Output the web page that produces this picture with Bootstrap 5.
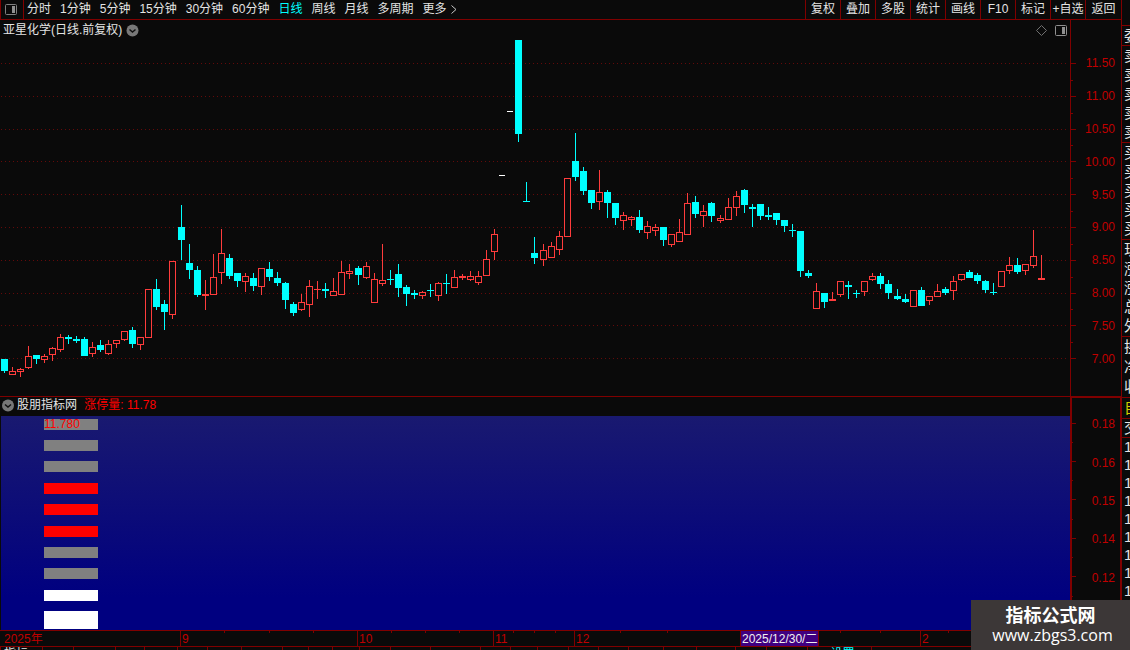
<!DOCTYPE html>
<html lang="zh-CN">
<head>
<meta charset="utf-8">
<meta name="viewport" content="width=device-width, initial-scale=1">
<title>亚星化学 日线</title>
<link href="https://cdn.jsdelivr.net/npm/bootstrap@5.3.0/dist/css/bootstrap.min.css" rel="stylesheet">
<style>
:root { --line: #800000; --ink: #e4e4e4; --axis: #c00000; --ground: #0a0a0a; }
body { background: var(--ground); color: var(--ink); font-family: "Liberation Sans", "Noto Sans CJK SC", sans-serif; font-size: 12px; line-height: 18px; }
.workspace { display: grid; grid-template-rows: 20px 377fr 233fr 17px 3px; }
svg { display: block; }
button, .period { background: none; border: 0; padding: 0; color: inherit; font: inherit; line-height: 18px; text-decoration: none; white-space: nowrap; }
.toolbar { border-bottom: 1px solid var(--line); }
.toolbar .period, .toolbar .tool { line-height: 19px; }
.layout-btn { width: 24px; border: solid var(--line); border-width: 0 1px; }
.periods { gap: 9px; padding-left: 3px; }
.period.active { color: #00ffff; }
.tool { width: 35px; border-left: 1px solid var(--line); }
.tool:first-child { margin-left: 0; }
.tool:last-child { width: 36px; }
.price { border-bottom: 1px solid var(--line); }
.pane-head { height: 20px; padding: 0 3px; }
.signal-head { height: 19px; line-height: 17px; padding-bottom: 2px; }
.min-0 { min-width: 0; min-height: 0; }
.scale { width: 51px; border-left: 1px solid var(--line); color: var(--axis); }
.scale svg { width: 5px; }
.scale ul { padding: 27px 6px 21px 0; }
.signal .scale { border-left-width: 2px; border-right: 1px solid var(--line); border-top: 1px solid var(--line); }
.signal .scale svg { width: 4px; }
.signal .scale ul { padding: 7px 5px 33px 0; }
.field { background: linear-gradient(#191970, #000080 85%); margin-left: 1px; }
.reading { left: 43px; top: 0; line-height: 16px; color: #f00; }
.alert-red { color: #f00; }
.dates { grid-template-columns: 180fr 177fr 136fr 81fr 166fr 180fr 201fr; border: solid var(--line); border-width: 1px 0; color: var(--axis); line-height: 16px; }
.dates > span { border-left: 1px solid var(--line); padding-left: 1px; height: 15px; }
.dates > span:first-child { border-left: 0; padding-left: 4px; }
.dates .cursor { background: #400080; color: #f0f0f0; border-right: 1px solid var(--line); display: block; width: 78px; height: 15px; margin-left: -1px; padding-left: 1px; }
.strip-text { top: 0; line-height: 14px; }
.strip-text .cyan-text { color: #00ffff; width: 26%; }
.quotes { width: 9px; border-left: 1px solid var(--line); padding-top: 25px; font-size: 15px; }
.quotes div { border-top: 1px solid var(--line); padding-left: 2px; white-space: nowrap; }
.quotes .q-head, .quotes .q-tab { line-height: 19px; }
.quotes .q-five { line-height: 19px; padding-bottom: 1px; }
.quotes .q-three { line-height: 20px; }
.quotes .q-tab { color: #d0d000; padding-bottom: 1px; }
.quotes .q-col, .quotes .q-ticks { line-height: 18px; }
.stamp { width: 159px; height: 50px; background: #3c3737; color: #fff; font-family: "Open Sans", "Noto Sans CJK SC", sans-serif; z-index: 3; }
.stamp strong { font: bold 18px/22px "Noto Sans CJK SC", sans-serif; margin-top: -3px; }
.stamp span { font-size: 16px; line-height: 20px; padding-left: 4px; }
</style>
</head>
<body class="vh-100 overflow-hidden position-relative d-flex">
<main class="workspace flex-grow-1 min-0 h-100">
  <nav class="toolbar d-flex">
    <button class="layout-btn d-flex align-items-center ps-1" aria-label="布局">
      <svg width="13" height="12" viewBox="0 0 13 12"><rect x=".5" y=".5" width="11" height="10" rx="1" fill="none" stroke="#808080"/><rect x="7" y="2" width="3" height="7" fill="#909090"/></svg>
    </button>
    <div class="periods d-flex">
      <a class="period" href="#">分时</a><a class="period" href="#">1分钟</a><a class="period" href="#">5分钟</a><a class="period" href="#">15分钟</a><a class="period" href="#">30分钟</a><a class="period" href="#">60分钟</a><a class="period active" href="#">日线</a><a class="period" href="#">周线</a><a class="period" href="#">月线</a><a class="period" href="#">多周期</a>
      <a class="period d-flex align-items-center gap-1" href="#">更多 <svg width="6" height="9" viewBox="0 0 6 9"><path d="M.5.5l4.500 4-4.500 4" fill="none" stroke="#c8c8c8"/></svg></a>
    </div>
    <div class="d-flex ms-auto">
      <button class="tool">复权</button><button class="tool">叠加</button><button class="tool">多股</button><button class="tool">统计</button><button class="tool">画线</button><button class="tool">F10</button><button class="tool">标记</button><button class="tool">+自选</button><button class="tool">返回</button>
    </div>
  </nav>

  <section class="price d-flex min-0">
    <div class="d-flex flex-column flex-grow-1 min-0">
      <header class="pane-head d-flex align-items-center flex-shrink-0">
        <span>亚星化学(日线.前复权)</span>
        <button class="ms-1" aria-label="展开"><svg width="13" height="13" viewBox="0 0 13 13"><circle cx="6.500" cy="6.500" r="6" fill="#787878"/><path d="M3.500 5.500l3 2.500 3-2.500" fill="none" stroke="#111" stroke-width="1.500"/></svg></button>
        <button class="ms-auto me-2" aria-label="标注"><svg width="11" height="11" viewBox="0 0 11 11"><path d="M5.500.5l5 5-5 5-5-5z" fill="none" stroke="#707070"/></svg></button>
        <button aria-label="侧栏"><svg width="12" height="11" viewBox="0 0 12 11"><rect x=".5" y=".5" width="11" height="10" rx="1" fill="none" stroke="#909090"/><rect x="7" y="2" width="3" height="7" fill="#909090"/></svg></button>
      </header>
      <svg id="candles" class="flex-grow-1 w-100 min-0" height="10" viewBox="0 40 1070 356" preserveAspectRatio="none" shape-rendering="crispEdges"></svg>
    </div>
    <div class="scale d-flex flex-shrink-0">
      <svg id="priceTicks" class="h-100" viewBox="0 20 5 376" preserveAspectRatio="none" shape-rendering="crispEdges"></svg>
      <ul class="list-unstyled mb-0 flex-grow-1 d-flex flex-column text-end">
        <li class="flex-fill d-flex align-items-center justify-content-end">11.50</li><li class="flex-fill d-flex align-items-center justify-content-end">11.00</li><li class="flex-fill d-flex align-items-center justify-content-end">10.50</li><li class="flex-fill d-flex align-items-center justify-content-end">10.00</li><li class="flex-fill d-flex align-items-center justify-content-end">9.50</li><li class="flex-fill d-flex align-items-center justify-content-end">9.00</li><li class="flex-fill d-flex align-items-center justify-content-end">8.50</li><li class="flex-fill d-flex align-items-center justify-content-end">8.00</li><li class="flex-fill d-flex align-items-center justify-content-end">7.50</li><li class="flex-fill d-flex align-items-center justify-content-end">7.00</li>
      </ul>
    </div>
  </section>

  <section class="signal d-flex min-0">
    <div class="d-flex flex-column flex-grow-1 min-0">
      <header class="signal-head d-flex align-items-center flex-shrink-0">
        <button aria-label="展开指标"><svg width="17" height="13" viewBox="0 0 17 13"><circle cx="8" cy="6.500" r="6" fill="#787878"/><path d="M5 5.500l3 2.500 3-2.500" fill="none" stroke="#111" stroke-width="1.500"/></svg></button>
        <span>股朋指标网</span><span class="alert-red ms-1">&nbsp;涨停量: 11.78</span>
      </header>
      <div class="field flex-grow-1 position-relative min-0">
        <svg id="levels" class="w-100 h-100" viewBox="1 416 1069 214" preserveAspectRatio="none" shape-rendering="crispEdges"></svg>
        <span class="reading position-absolute">11.780</span>
      </div>
    </div>
    <div class="scale d-flex flex-shrink-0">
      <svg id="signalTicks" class="h-100" viewBox="0 398 4 232" preserveAspectRatio="none" shape-rendering="crispEdges"></svg>
      <ul class="list-unstyled mb-0 flex-grow-1 d-flex flex-column">
        <li class="flex-fill d-flex align-items-center justify-content-end">0.18</li><li class="flex-fill d-flex align-items-center justify-content-end">0.16</li><li class="flex-fill d-flex align-items-center justify-content-end">0.15</li><li class="flex-fill d-flex align-items-center justify-content-end">0.14</li><li class="flex-fill d-flex align-items-center justify-content-end">0.12</li>
      </ul>
    </div>
  </section>

  <div class="dates d-grid position-relative">
    <span>2025年</span><span>9</span><span>10</span><span>11</span><span>12</span><span><b class="cursor fw-normal">2025/12/30/二</b></span><span>2</span>
    <svg id="dateTicks" class="position-absolute w-100 top-0 start-0" height="3" viewBox="0 0 1121 3" preserveAspectRatio="none" shape-rendering="crispEdges"></svg>
  </div>
  <div class="position-relative overflow-hidden">
    <svg id="strip" class="w-100" height="3" viewBox="0 0 1121 3" preserveAspectRatio="none" shape-rendering="crispEdges"></svg>
    <div class="strip-text position-absolute w-100 d-flex justify-content-between ps-1"><span>指标</span><span class="cyan-text">设置</span></div>
  </div>
</main>

<aside class="quotes flex-shrink-0 overflow-hidden h-100">
  <div class="q-head">委比</div>
  <div class="q-five">卖五<br>卖四<br>卖三<br>卖二<br>卖一</div>
  <div class="q-five">买一<br>买二<br>买三<br>买四<br>买五</div>
  <div class="q-five">现价<br>涨跌<br>涨幅<br>总量<br>外盘</div>
  <div class="q-three">换手<br>净资<br>收益</div>
  <div class="q-tab">自选</div>
  <div class="q-col">交易</div>
  <div class="q-ticks">14:5<br>14:5<br>14:5<br>14:5<br>14:5<br>14:5<br>14:5<br>14:5<br>14:5</div>
</aside>

<div class="stamp position-absolute bottom-0 end-0 d-flex flex-column align-items-center justify-content-center">
  <strong>指标公式网</strong><span>www.zbgs3.com</span>
</div>

<script src="https://cdn.jsdelivr.net/npm/bootstrap@5.3.0/dist/js/bootstrap.bundle.min.js"></script>
<script>
// One entry per trading day: high, body top, body bottom, low; r = rising, c = falling, w = single price.
const days = `359 359 371 373c|367 371 375 375r|368 369 372 377r|346 356 368 369r|355 355 359 364c|354 356 360 363r|347 348 355 361r|334 337 350 352r|335 337 339 344c|336 339 341 343c
337 339 356 356c|342 347 354 357r|340 345 350 352c|340 344 354 355r|340 340 344 348r|331 331 340 341r|327 330 344 348c|337 337 345 350r|289 289 338 338r|279 289 307 310c
300 304 312 330c|261 261 315 319r|205 227 240 260c|244 263 270 279c|266 270 295 297c|280 294 296 310r|254 277 295 295r|229 253 273 284r|254 258 276 279c|273 273 281 287c
273 276 282 292r|273 278 286 291c|268 268 287 295r|262 269 277 281c|272 278 283 286c|282 283 300 309c|302 304 313 316c|294 302 310 311r|280 286 305 317r|281 289 290 299r
283 289 291 298c|278 291 296 296r|261 272 295 295r|264 271 274 279r|266 268 275 285c|262 266 278 279r|273 279 303 303r|244 280 284 286r|270 279 280 285c|264 274 288 297c
285 287 294 306c|290 293 295 299c|291 292 296 299r|284 290 291 297c|282 283 296 301r|274 283 284 294c|270 277 288 288r|274 276 278 280r|271 276 280 281r|271 276 283 285r
250 259 276 276r|229 234 252 260r|175 175 176 176w|111 111 112 112w|40 40 134 142c|182 201 202 202c|237 253 258 264c|244 250 260 266r|242 246 258 258r|231 236 250 255r
178 178 237 237r|133 161 177 181c|167 171 191 195c|190 190 203 209c|170 192 202 210r|190 192 203 218c|203 203 218 225c|212 215 221 230r|216 217 220 226r|210 217 230 233c
221 226 233 239r|224 227 231 236r|227 227 240 246c|234 234 245 247r|219 232 242 242r|193 203 235 235r|196 202 214 218c|205 211 216 227r|202 203 216 222c|215 218 221 223r
198 207 220 220r|191 196 208 216r|189 190 205 213c|204 207 209 227c|204 204 216 220c|207 215 217 220c|213 213 220 225c|220 220 226 232c|224 230 231 237c|231 231 271 277c
270 273 276 278c|283 291 309 309r|293 293 302 308c|292 299 301 301r|281 281 295 297r|281 285 287 299c|290 293 294 298c|281 281 292 296r|273 276 280 281r|273 276 284 289c
280 284 293 299c|289 296 299 300c|294 299 302 303c|290 290 307 307r|287 290 306 306c|296 296 301 305r|284 291 297 297r|287 289 293 295c|276 281 291 300r|274 274 280 281r
270 272 278 278c|273 275 281 284c|280 281 290 293c|283 292 293 295c|271 271 287 287r|257 265 271 274r|258 265 272 274c|264 264 271 275r|230 256 266 268r|255 278 280 280r`.split(/[|\n]/);
const box = (x, y, w, h, fill) => `<rect x="${x}" y="${y}" width="${w}" height="${h}" fill="${fill}"/>`;
const put = (id, markup) => { document.getElementById(id).innerHTML = markup; };
const dark = '#800000', ground = '#0a0a0a';

const rows = [63, 96, 129, 161, 194, 227, 260, 293, 325, 358];
let out = rows.map(y => `<path d="M1 ${y + .5}H1068" stroke="#640a0a" stroke-dasharray="1 3"/>`).join('');
days.forEach((day, i) => {
  const kind = day.slice(-1);
  const [high, top, bottom, low] = day.slice(0, -1).split(' ').map(Number);
  const x = 1 + 8 * i + Math.floor((i + .6) * .0449);
  const paint = { r: '#ff3c3c', c: '#00ffff', w: '#ffffff' }[kind];
  if (kind === 'w') { out += box(x, top, 6, 1, paint); return; }
  out += box(x + 3, high, 1, low - high, paint) + box(x, top, 7, bottom - top, paint);
  if (kind === 'r' && bottom - top > 2) out += box(x + 1, top + 1, 5, bottom - top - 2, ground);
});
put('candles', out);

put('priceTicks', rows.map(y => box(0, y, 5, 1, dark)).join('') +
  [80, 113, 145, 178, 211, 244, 277, 309, 342].map(y => box(0, y, 2, 1, dark)).join(''));
put('signalTicks', [423, 461, 499, 538, 576].map(y => box(0, y, 4, 1, dark)).join('') +
  [442, 480, 519, 557, 596].map(y => box(0, y, 1, 1, dark)).join(''));

const levels = [[419, 11, '#808080'], [440, 11, '#808080'], [461, 11, '#808080'], [483, 11, '#f00'], [504, 11, '#f00'],
  [526, 11, '#f00'], [547, 11, '#808080'], [568, 11, '#808080'], [590, 11, '#fff'], [611, 18, '#fff']];
put('levels', levels.map(([y, h, fill]) => box(44, y, 54, h, fill)).join(''));

put('dateTicks', [224, 269, 313, 391, 425, 459, 513, 534, 555, 620, 667, 840, 880, 948].map(x => box(x, 0, 1, 2, dark)).join(''));
put('strip', [0, 42, 73, 115, 144, 177, 207, 241, 282, 308, 332, 359, 390, 430, 480, 510, 537, 568, 598, 628, 663, 696, 735, 766, 807, 839, 871].map(x => box(x, 0, 1, 3, dark)).join(''));
</script>
</body>
</html>
